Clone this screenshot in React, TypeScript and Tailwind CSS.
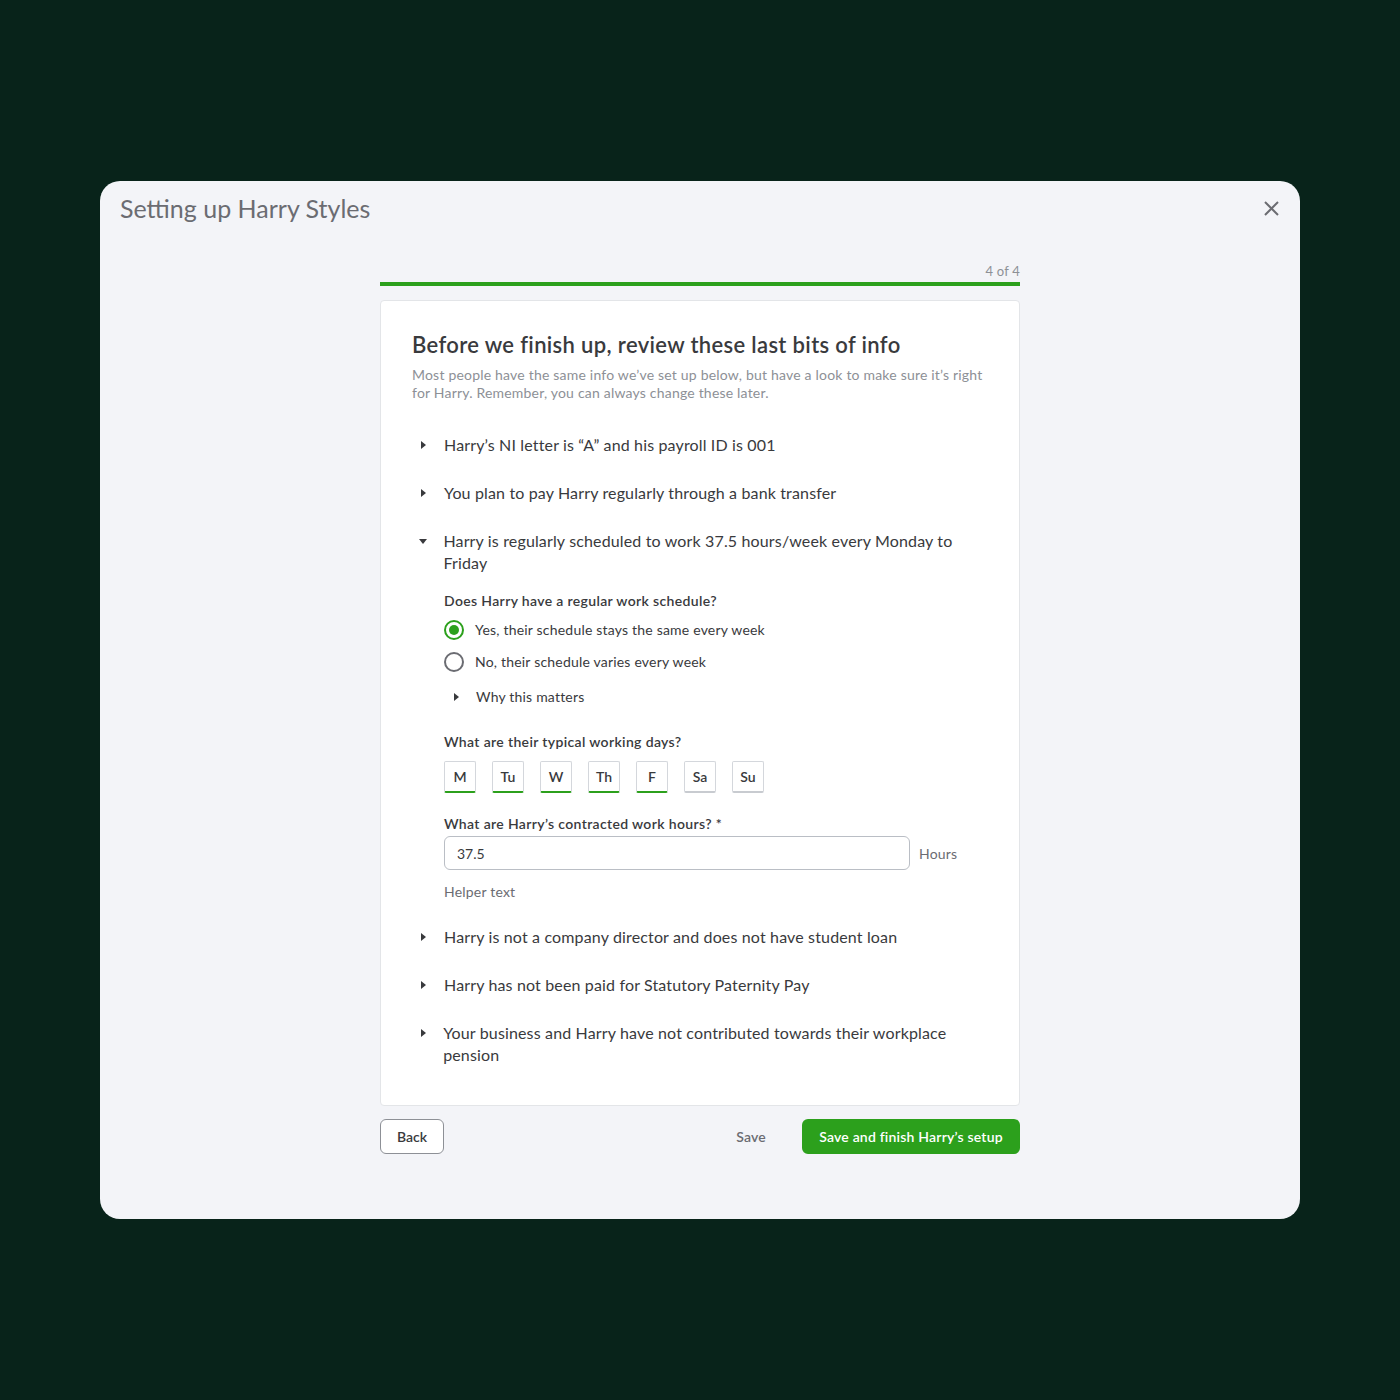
import React from "react";

const Caret = ({ open }: { open?: boolean }) => (
  <svg width="10" height="10" viewBox="0 0 10 10" className="shrink-0">
    {open ? <path d="M1 3h8L5 8z" fill="#393a3d" /> : <path d="M3 1v8l5-4z" fill="#393a3d" />}
  </svg>
);

const Item = ({ text, open }: { text: string; open?: boolean }) => (
  <div className="flex items-start">
    <div className="w-8 h-[22px] flex items-center pl-[6px]">
      <Caret open={open} />
    </div>
    <p className="text-[16px] leading-[22px] text-[#393a3d] tracking-[0.15px]">{text}</p>
  </div>
);

const days = [
  { d: "M", on: true },
  { d: "Tu", on: true },
  { d: "W", on: true },
  { d: "Th", on: true },
  { d: "F", on: true },
  { d: "Sa", on: false },
  { d: "Su", on: false },
];

export default function App() {
  return (
    <div
      className="min-h-[1400px] w-full bg-[#08231a] flex items-start justify-center pt-[181px]"
      style={{ fontFamily: "Lato, 'Open Sans', sans-serif" }}
    >
      <div className="w-[1200px] h-[1038px] bg-[#f3f4f8] rounded-[20px] flex flex-col">
        <div className="flex items-center justify-between pl-5 pr-5 pt-[11px]">
          <h1 className="text-[25px] leading-[32px] text-[#6b6c72]">Setting up Harry Styles</h1>
          <svg width="15" height="15" viewBox="0 0 15 15" className="mr-[1px]">
            <path d="M1 1l13 13M14 1L1 14" stroke="#6b6c72" strokeWidth="2" />
          </svg>
        </div>

        <div className="w-[640px] mx-auto mt-[38px]">
          <div className="text-right text-[13px] leading-[18px] text-[#8d9096] tracking-[0.2px]">4 of 4</div>
          <div className="h-1 bg-[#2ca01c] mt-[2px]" />

          <div className="mt-[14px] bg-white border border-[#e3e5e8] rounded-[4px] px-[31px] pt-[29px] pb-[39px]">
            <h2 className="text-[22px] leading-[30px] font-semibold text-[#393a3d] tracking-[0.35px]">
              Before we finish up, review these last bits of info
            </h2>
            <p className="mt-[6px] text-[14px] leading-[18px] text-[#8d9096] tracking-[0.2px]">
              Most people have the same info we’ve set up below, but have a look to make sure it’s right for Harry. Remember, you can always change these later.
            </p>

            <div className="mt-[32px] flex flex-col gap-[26px]">
              <Item text="Harry’s NI letter is “A” and his payroll ID is 001" />
              <Item text="You plan to pay Harry regularly through a bank transfer" />
              <div>
                <Item open text="Harry is regularly scheduled to work 37.5 hours/week every Monday to Friday" />
                <div className="pl-8 mt-[17px]">
                  <p className="text-[14px] leading-[20px] font-semibold text-[#393a3d] tracking-[0.35px]">Does Harry have a regular work schedule?</p>
                  <div className="mt-[8px] flex items-center gap-[11px]">
                    <span className="w-5 h-5 rounded-full border-2 border-[#2ca01c] flex items-center justify-center">
                      <span className="w-[10px] h-[10px] rounded-full bg-[#2ca01c]" />
                    </span>
                    <span className="text-[14px] text-[#393a3d] tracking-[0.2px]">Yes, their schedule stays the same every week</span>
                  </div>
                  <div className="mt-[11px] flex items-center gap-[11px]">
                    <span className="w-5 h-5 rounded-full border-2 border-[#6b6c72]" />
                    <span className="text-[14px] text-[#393a3d] tracking-[0.2px]">No, their schedule varies every week</span>
                  </div>
                  <div className="mt-[14px] flex items-center">
                    <div className="w-8 pl-[7px]">
                      <Caret />
                    </div>
                    <span className="text-[14px] text-[#393a3d] tracking-[0.2px]">Why this matters</span>
                  </div>

                  <p className="mt-[25px] text-[14px] leading-[20px] font-semibold text-[#393a3d] tracking-[0.35px]">What are their typical working days?</p>
                  <div className="mt-[9px] flex gap-4">
                    {days.map((x) =>
                      x.on ? (
                        <div key={x.d} className="w-8 h-8 bg-white border border-[#d4d7dc] border-b-2 border-b-[#2ca01c] rounded-[2px] flex items-center justify-center text-[14px] font-semibold text-[#393a3d]">
                          {x.d}
                        </div>
                      ) : (
                        <div key={x.d} className="w-8 h-8 bg-white border border-[#d4d7dc] border-b-2 border-b-[#c8cbd0] rounded-[2px] flex items-center justify-center text-[14px] font-semibold text-[#393a3d]">
                          {x.d}
                        </div>
                      )
                    )}
                  </div>

                  <p className="mt-[21px] text-[14px] leading-[20px] font-semibold text-[#393a3d] tracking-[0.35px]">What are Harry’s contracted work hours? *</p>
                  <div className="mt-[2px] flex items-center gap-[9px]">
                    <div className="w-[466px] h-[34px] border border-[#babec5] rounded-[6px] flex items-center px-3 text-[14px] text-[#393a3d]">37.5</div>
                    <span className="text-[14px] text-[#6b6c72] tracking-[0.2px]">Hours</span>
                  </div>
                  <p className="mt-[12px] text-[14px] leading-[20px] text-[#6b6c72] tracking-[0.2px]">Helper text</p>
                </div>
              </div>
              <div className="-mt-[2px]">
                <Item text="Harry is not a company director and does not have student loan" />
              </div>
              <Item text="Harry has not been paid for Statutory Paternity Pay" />
              <Item text="Your business and Harry have not contributed towards their workplace pension" />
            </div>
          </div>

          <div className="mt-[13px] flex items-center">
            <button className="h-[35px] px-4 bg-white border border-[#8d9096] rounded-[6px] text-[14px] font-semibold text-[#393a3d]">Back</button>
            <div className="flex-1" />
            <span className="text-[14px] font-semibold text-[#6b6c72] mr-9 tracking-[0.2px]">Save</span>
            <button className="h-[35px] w-[218px] bg-[#2ca01c] rounded-[6px] text-[14px] font-semibold text-white tracking-[0.2px]">Save and finish Harry’s setup</button>
          </div>
        </div>
      </div>
    </div>
  );
}
